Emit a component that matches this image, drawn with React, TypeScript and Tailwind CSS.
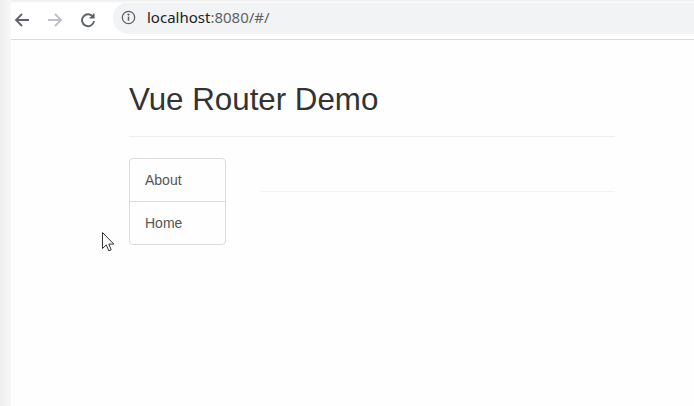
import React from "react";

function BrowserBar() {
  return (
    <div className="relative flex h-[40px] items-center border-b border-[#dadce0] bg-white">
      <div className="absolute inset-x-0 top-0 h-[3px] bg-gradient-to-b from-[#ececec] to-white" />
      <div className="flex w-[102px] items-center gap-[17px] pl-[3px]">
        <svg width="16" height="16" viewBox="0 0 16 16" fill="none" stroke="#5f6368" strokeWidth="1.8">
          <path d="M15 8H2M8 2L2 8l6 6" />
        </svg>
        <svg width="16" height="16" viewBox="0 0 16 16" fill="none" stroke="#bdc1c6" strokeWidth="1.8">
          <path d="M1 8h13M8 2l6 6-6 6" />
        </svg>
        <svg width="16" height="16" viewBox="0 0 16 16" fill="none" stroke="#5f6368" strokeWidth="1.9">
          <path d="M13.2 5.2A6 6 0 1 0 14 9" />
          <path d="M14 1.5v4.5H9.5" fill="#5f6368" strokeWidth="1.2" />
        </svg>
      </div>
      <div className="flex h-[32px] flex-1 items-center rounded-l-full bg-[#f1f3f4] pl-[8px] mt-[-4px]">
        <svg width="15" height="15" viewBox="0 0 16 16" fill="none" stroke="#5f6368" strokeWidth="1.4">
          <circle cx="8" cy="8" r="6.6" />
          <path d="M8 7v4.5" strokeWidth="1.6" />
          <circle cx="8" cy="4.8" r="0.5" fill="#5f6368" />
        </svg>
        <span className="ml-[11px] text-[15px] text-[#202124] [font-family:'Noto_Sans',sans-serif]">
          localhost<span className="text-[#5f6368]">:8080/#/</span>
        </span>
      </div>
    </div>
  );
}

function Cursor() {
  return (
    <svg className="absolute left-[102px] top-[232px]" width="13" height="20" viewBox="0 0 13 20">
      <path d="M0.5 0.5V16.5L4.3 12.9L6.8 18.8L9.2 17.8L6.8 12.1H11.8Z" fill="white" stroke="#333" strokeWidth="1" strokeLinejoin="round" />
    </svg>
  );
}

export default function App() {
  return (
    <div className="relative flex h-[406px] w-[694px] overflow-hidden bg-white [font-family:'Liberation_Sans',Arial,sans-serif]">
      <div className="w-[11px] shrink-0 bg-gradient-to-r from-[#eeeeee] to-[#f8f8f8]" />
      <div className="flex flex-1 flex-col">
        <BrowserBar />
        <div className="flex-1 bg-[#fefefe] pl-[118px] pr-[79px]">
          <div className="mt-[43px] border-b border-[#eeeeee] pb-[9px]">
            <h1 className="mb-[10px] text-[31.3px] leading-[1.1] text-[#333333]">Vue Router Demo</h1>
          </div>
          <div className="mt-[21px] flex">
            <div className="w-[97px] rounded-[4px] border border-[#dddddd] text-[14px] text-[#555555]">
              <div className="flex h-[42px] items-center pl-[15px]">About</div>
              <div className="flex h-[43px] items-center border-t border-[#dddddd] pl-[15px]">Home</div>
            </div>
            <div className="ml-[34px] flex-1">
              <div className="mt-[33px] border-t border-[#f2f2f2]" />
            </div>
          </div>
        </div>
      </div>
      <Cursor />
    </div>
  );
}
